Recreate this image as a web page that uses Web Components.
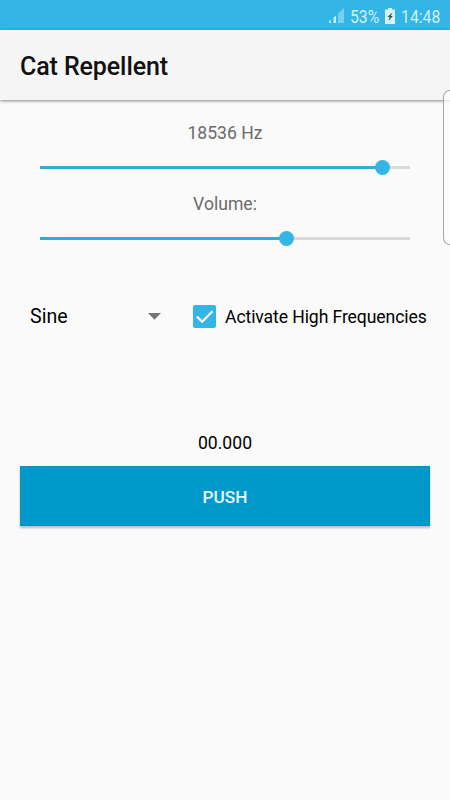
<!DOCTYPE html>
<html lang="en">
<head>
<meta charset="utf-8">
<title>Cat Repellent</title>
<style>
    body{
        margin: 0;
        background: #fafafa;
        font-family: Roboto, "Liberation Sans", sans-serif;
    }
</style>
</head>
<body>
<cat-app></cat-app>

<script>
const makeTemplate = (html) => {
    const template = document.createElement('template')
    template.innerHTML = html
    return template
}

class BaseElement extends HTMLElement{
    constructor(){
        super()
        this.attachShadow({mode: "open"})
        this.shadowRoot.appendChild(this.constructor.template.content.cloneNode(true))
    }
}

class StatusBar extends BaseElement{
    static template = makeTemplate(`
        <style>
            :host{
                display: flex;
                justify-content: flex-end;
                align-items: center;
                height: 30px;
                padding: 2px 9px 0 0;
                box-sizing: border-box;
                background: #33b5e5;
                color: #d0f1fc;
                font-size: 19px;
                line-height: 28px;
            }
            svg{
                display: block;
                flex: none;
            }
            .text{
                flex: none;
                display: flex;
                justify-content: center;
                padding-top: 1px;
            }
            .text span{
                transform: scaleX(0.83);
                white-space: nowrap;
            }
            .percent{
                width: 30px;
                margin: 0 5px 0 6px;
            }
            .time{
                width: 41px;
                margin-left: 5px;
            }
        </style>
        <svg width="15" height="16" viewBox="0 0 15 16">
            <path d="M0 15v-2l2-1v3zM4.500 15V9.500l2.500-2V15z" fill="#c5ecf9"/>
            <path d="M9 15V5.500L15 0v15z" fill="#78d0f0"/>
        </svg>
        <div class="text percent"><span>53%</span></div>
        <svg width="10" height="16" viewBox="0 0 10 16">
            <path d="M3 0h4v1.500h3V16H0V1.500h3z" fill="#d8f3fc"/>
            <path d="M7.500 4.500 2.300 9h2.400L3.500 13 7.800 8H5.800z" fill="#24566b"/>
        </svg>
        <div class="text time"><span>14:48</span></div>
    `)
}
customElements.define('status-bar', StatusBar)

class AppBar extends BaseElement{
    static template = makeTemplate(`
        <style>
            :host{
                display: flex;
                align-items: center;
                height: 70px;
                padding: 2px 20px 0;
                box-sizing: border-box;
                background: #f5f5f5;
                box-shadow: 0 1px 3px rgba(0, 0, 0, 0.45);
                color: #111;
                font-size: 25px;
                font-weight: 500;
                letter-spacing: -0.1px;
            }
        </style>
        <slot></slot>
    `)
}
customElements.define('app-bar', AppBar)

class SeekBar extends BaseElement{
    static template = makeTemplate(`
        <style>
            :host{
                display: block;
                color: #6b6b6b;
                font-size: 17.6px;
                line-height: 24px;
                text-align: center;
            }
            .bar{
                display: flex;
                align-items: center;
                height: 23px;
                margin: 11px 20px 1px;
            }
            .fill{
                flex: none;
                height: 3px;
                background: #2eaed5;
            }
            .thumb{
                flex: none;
                width: 15px;
                height: 15px;
                margin: 0 -7.5px;
                border-radius: 50%;
                background: #33b5e5;
                z-index: 1;
            }
            .rest{
                flex: 1;
                height: 3px;
                background: #d9d9d9;
            }
        </style>
        <slot></slot>
        <div class="bar">
            <div class="fill"></div>
            <div class="thumb"></div>
            <div class="rest"></div>
        </div>
    `)
    connectedCallback(){
        this.shadowRoot.querySelector('.fill').style.width = this.getAttribute('value') + '%'
    }
}
customElements.define('seek-bar', SeekBar)

class WaveSpinner extends BaseElement{
    static template = makeTemplate(`
        <style>
            :host{
                display: flex;
                align-items: center;
                justify-content: space-between;
                color: #000;
                font-size: 19.6px;
            }
            svg{
                display: block;
            }
        </style>
        <slot></slot>
        <svg width="13" height="7" viewBox="0 0 13 7"><path d="M0 0h13L6.500 6.800z" fill="#757575"/></svg>
    `)
}
customElements.define('wave-spinner', WaveSpinner)

class CheckBox extends BaseElement{
    static template = makeTemplate(`
        <style>
            :host{
                display: flex;
                align-items: center;
                gap: 9px;
                color: #000;
                font-size: 17.6px;
                letter-spacing: -0.1px;
                white-space: nowrap;
            }
            svg{
                display: block;
                flex: none;
            }
            span{
                padding-top: 2px;
            }
        </style>
        <svg width="23" height="23" viewBox="0 0 23 23">
            <rect width="23" height="23" rx="2" fill="#33b5e5"/>
            <path d="M3.800 11.500l5.400 5.200L19.500 6.300" fill="none" stroke="#fafafa" stroke-width="2.300"/>
        </svg>
        <span><slot></slot></span>
    `)
}
customElements.define('check-box', CheckBox)

class PushButton extends BaseElement{
    static template = makeTemplate(`
        <style>
            :host{
                display: block;
            }
            button{
                display: block;
                width: 100%;
                height: 60px;
                padding: 1px 0 0;
                border: 1px solid #0b8fbd;
                background: #0099cc;
                box-shadow: 0 2px 2px rgba(0, 0, 0, 0.25);
                color: #e8fafe;
                font: 500 17.2px Roboto, "Liberation Sans", sans-serif;
            }
        </style>
        <button><slot></slot></button>
    `)
}
customElements.define('push-button', PushButton)

class EdgeHandle extends BaseElement{
    static template = makeTemplate(`
        <style>
            :host{
                position: absolute;
                top: 90px;
                right: 0;
                width: 7px;
                height: 155px;
                box-sizing: border-box;
                border: 1px solid #a5a5a5;
                border-right: 0;
                border-radius: 7px 0 0 7px;
                background: rgba(255, 255, 255, 0.65);
            }
        </style>
    `)
}
customElements.define('edge-handle', EdgeHandle)

class CatApp extends BaseElement{
    static template = makeTemplate(`
        <style>
            :host{
                display: block;
                position: relative;
                height: 800px;
                overflow: hidden;
                background: #fafafa;
            }
            main{
                display: flex;
                flex-direction: column;
                padding: 21px 20px 0;
            }
            seek-bar + seek-bar{
                margin-top: 12px;
            }
            .controls{
                display: flex;
                align-items: center;
                height: 40px;
                margin-top: 45px;
            }
            wave-spinner{
                width: 131px;
                margin-left: 10px;
            }
            check-box{
                margin-left: 32px;
            }
            .timer{
                margin: 95px 0 11px;
                color: #000;
                font-size: 17.6px;
                line-height: 24px;
                text-align: center;
            }
        </style>
        <status-bar></status-bar>
        <app-bar>Cat Repellent</app-bar>
        <main>
            <seek-bar value="92.7">18536 Hz</seek-bar>
            <seek-bar value="66.6">Volume:</seek-bar>
            <div class="controls">
                <wave-spinner>Sine</wave-spinner>
                <check-box>Activate High Frequencies</check-box>
            </div>
            <div class="timer">00.000</div>
            <push-button>PUSH</push-button>
        </main>
        <edge-handle></edge-handle>
    `)
}
customElements.define('cat-app', CatApp)
</script>
</body>
</html>
